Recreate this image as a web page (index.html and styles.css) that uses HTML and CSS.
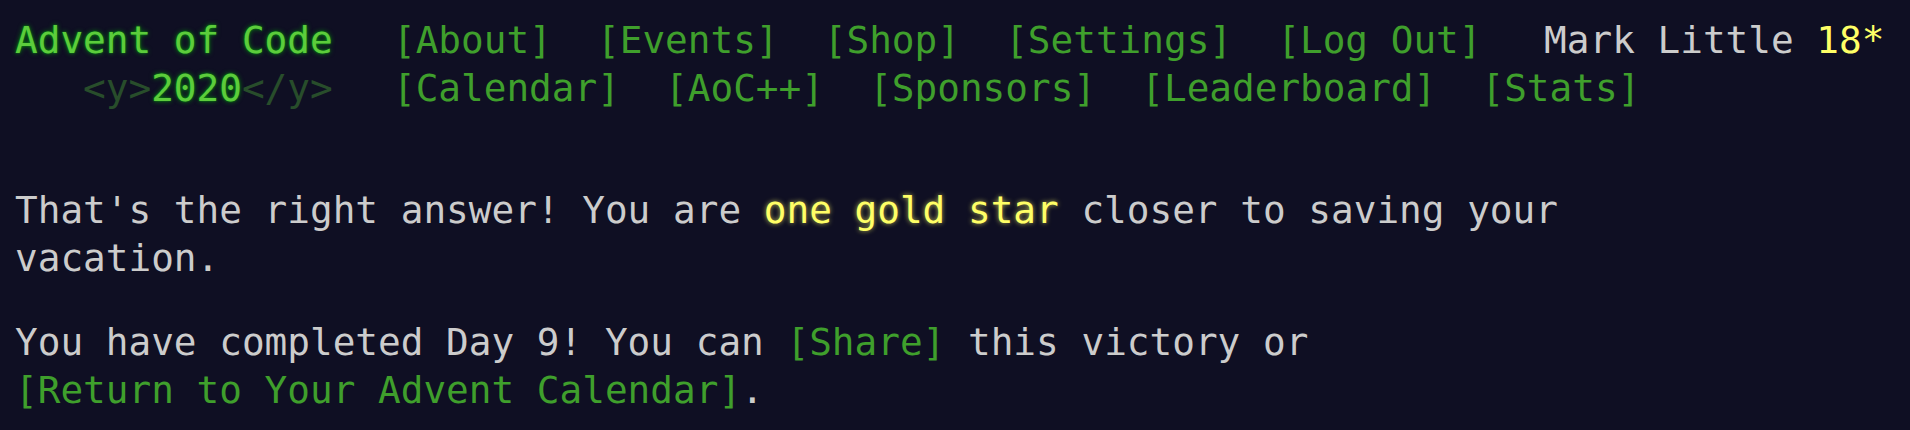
FILE: index.html
```html
<!DOCTYPE html>
<html lang="en">
<head>
<meta charset="utf-8">
<title>Day 9 - Advent of Code 2020</title>
<link rel="stylesheet" href="styles.css">
</head>
<body>
<header class="header">
  <div class="row">
    <h1 class="title title-global"><a href="#">Advent of Code</a></h1>
    <nav>
      <ul class="nav-list">
        <li><a href="#">[About]</a></li>
        <li><a href="#">[Events]</a></li>
        <li><a href="#">[Shop]</a></li>
        <li><a href="#">[Settings]</a></li>
        <li><a href="#">[Log Out]</a></li>
      </ul>
    </nav>
    <div class="user">Mark Little <span class="star-count">18*</span></div>
  </div>
  <div class="row">
    <h1 class="title title-event">&nbsp;&nbsp;&nbsp;<span class="title-event-wrap">&lt;y&gt;</span><a href="#">2020</a><span class="title-event-wrap">&lt;/y&gt;</span></h1>
    <nav>
      <ul class="nav-list">
        <li><a href="#">[Calendar]</a></li>
        <li><a href="#">[AoC++]</a></li>
        <li><a href="#">[Sponsors]</a></li>
        <li><a href="#">[Leaderboard]</a></li>
        <li><a href="#">[Stats]</a></li>
      </ul>
    </nav>
  </div>
</header>
<main class="main">
  <article class="article">
    <p>That's the right answer! You are <span class="day-success">one gold star</span> closer to saving your vacation.</p>
    <p>You have completed Day 9! You can <a href="#">[Share]</a> this victory or <a href="#">[Return to Your Advent Calendar]</a>.</p>
  </article>
</main>
</body>
</html>
```
FILE: styles.css
```css
html, body {
  margin: 0;
  padding: 0;
  background: #0f0f23;
}

body {
  color: #cccccc;
  font-family: "DejaVu Sans Mono", "Liberation Mono", monospace;
  font-size: 37.7px;
  line-height: 48px;
  padding: 16px 15px 0 15px;
  width: 1910px;
  height: 430px;
  box-sizing: border-box;
  overflow: hidden;
}

a {
  color: #3f9f2c;
  text-decoration: none;
}

.header {
  display: flex;
  flex-direction: column;
}

.row {
  display: flex;
  align-items: baseline;
  white-space: nowrap;
}

.title {
  margin: 0;
  padding-right: 1em;
  font-size: 1em;
  font-weight: normal;
  width: 14ch;
  flex: none;
}

.title a {
  color: #5ccc3c;
  text-shadow: 0 0 2px rgba(0, 204, 0, 0.6), 0 0 5px rgba(0, 204, 0, 0.6);
}

.title-event-wrap {
  color: #5ccc3c;
  opacity: 0.33;
}

.nav-list {
  display: flex;
  list-style: none;
  margin: 0;
  padding: 0;
}

.nav-list li {
  padding: 0 0.6em;
}

.user {
  padding-left: 40px;
  color: #cccccc;
}

.star-count {
  color: #ffff66;
}

.main {
  margin-top: 74px;
}

.article {
  width: 45em;
}

.article p {
  margin: 0 0 36px 0;
}

.article a {
  white-space: nowrap;
}

.day-success {
  color: #ffff66;
  text-shadow: 0 0 5px rgba(255, 255, 102, 0.7);
}
```
